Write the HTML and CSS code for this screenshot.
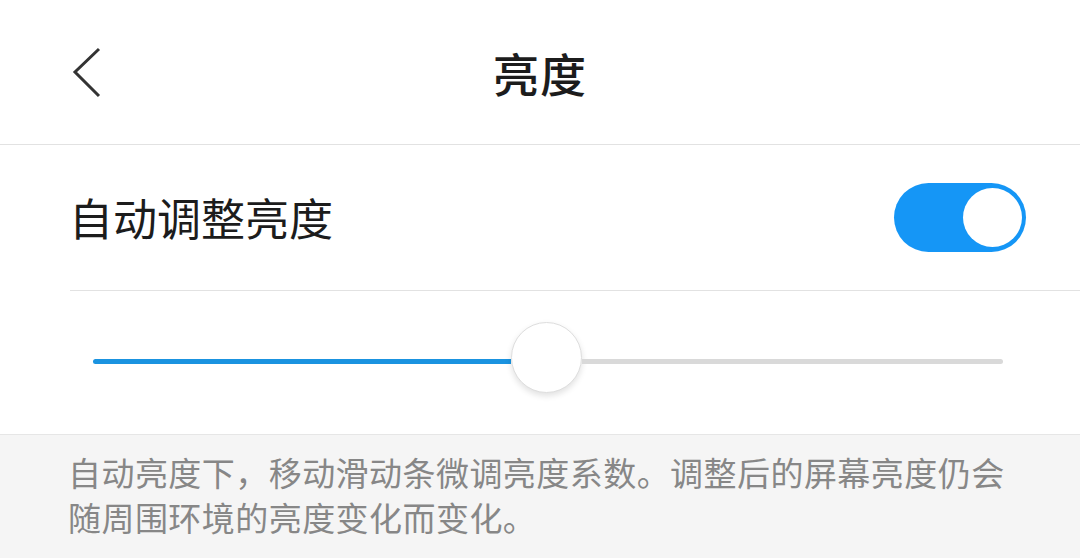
FILE: index.html
```html
<!DOCTYPE html>
<html lang="zh-CN">
<head>
  <meta charset="UTF-8" />
  <title>亮度</title>
  <link rel="stylesheet" href="styles.css">
</head>
<body>

<header class="barra">
  <button class="volver" aria-label="返回">
    <svg width="30" height="52" viewBox="0 0 30 52"><path d="M27 2 L3 25 L27 49" fill="none" stroke="#333" stroke-width="3"/></svg>
  </button>
  <h1>亮度</h1>
  <span></span>
</header>

<section class="ajuste">
  <span class="etiqueta">自动调整亮度</span>
  <div class="interruptor activo"><div class="bola"></div></div>
</section>

<section class="deslizador">
  <div class="pista">
    <div class="lleno" style="width: 45.9%"></div>
    <div class="pulgar"></div>
    <div class="vacio"></div>
  </div>
</section>

<section class="nota">
  <p>自动亮度下，移动滑动条微调亮度系数。调整后的屏幕亮度仍会随周围环境的亮度变化而变化。</p>
</section>

</body>
</html>
```

FILE: styles.css
```css
body { margin: 0; background: #fff; font-family: "Noto Sans CJK SC", "Noto Sans", sans-serif; color: #1c1c1c; width: 1080px; height: 558px; overflow: hidden; }
.barra { height: 144px; display: grid; grid-template-columns: 1fr auto 1fr; align-items: center; border-bottom: 1px solid #e2e2e2; }
.barra h1 { margin: 0; font-size: 46px; font-weight: 500; letter-spacing: 1px; }
.volver { justify-self: start; margin-left: 72px; margin-top: 2px; background: none; border: none; padding: 0; display: flex; }
.ajuste { margin-left: 70px; height: 145px; display: flex; align-items: center; justify-content: space-between; border-bottom: 1px solid #e2e2e2; }
.etiqueta { font-size: 44px; margin-left: -1px; margin-top: -2px; }
.interruptor { width: 132px; height: 69px; border-radius: 35px; background: #ddd; margin-right: 54px; display: flex; align-items: center; padding: 0 4px; box-sizing: border-box; }
.interruptor.activo { background: #1596f6; justify-content: flex-end; }
.bola { width: 59px; height: 59px; border-radius: 50%; background: #fff; }
.deslizador { height: 143px; padding: 0 77px 0 93px; display: flex; align-items: center; }
.pista { flex: 1; display: flex; align-items: center; margin-top: -2px; }
.lleno { height: 5px; background: #1a93e0; border-radius: 3px 0 0 3px; }
.vacio { flex: 1; height: 5px; background: #d9d9d9; border-radius: 0 3px 3px 0; }
.pulgar { width: 69px; height: 69px; border-radius: 50%; background: #fff; border: 1px solid #dedede; box-shadow: 0 3px 6px rgba(0,0,0,0.12); margin-top: -8px; flex-shrink: 0; }
.nota { background: #f5f5f5; border-top: 1px solid #e6e6e6; padding: 15px 60px 0 68px; height: 124px; box-sizing: border-box; }
.nota p { margin: 0; font-size: 33px; line-height: 45px; color: #878787; letter-spacing: 0.45px; }
```
